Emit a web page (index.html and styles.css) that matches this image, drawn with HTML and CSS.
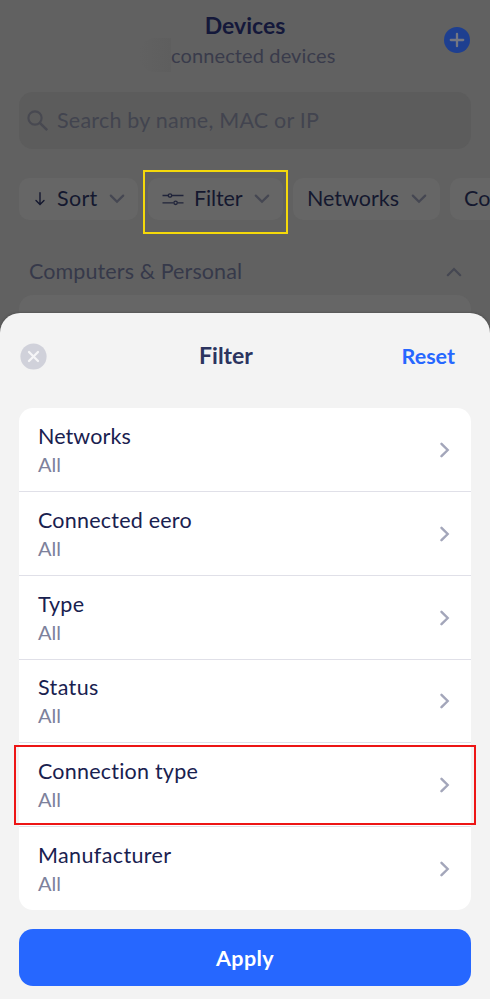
FILE: index.html
```html
<!DOCTYPE html>
<html lang="en">
<head>
<meta charset="utf-8">
<title>Devices</title>
<link rel="stylesheet" href="styles.css">
</head>
<body>
<div class="app">
  <main class="page">
    <header class="header">
      <h1 class="title">Devices</h1>
      <p class="subtitle"><span class="smudge"></span><span>connected devices</span></p>
      <svg class="add" viewBox="0 0 26 26"><circle cx="13" cy="13" r="13" fill="#1e3f90"/><path d="M13 6.8v12.4M6.8 13h12.4" stroke="#747782" stroke-width="2.3" stroke-linecap="round"/></svg>
    </header>
    <div class="search">
      <svg class="search-icon" viewBox="0 0 22 22" fill="none" stroke="#484951" stroke-width="2.1"><circle cx="8" cy="8" r="6.6"/><path d="M12.8 12.8l7.400 7.400" stroke-width="2.5"/></svg>
      <span class="search-text">Search by name, MAC or IP</span>
    </div>
    <nav class="chips">
      <div class="chip chip-sort">
        <svg class="arrow" viewBox="0 0 10 14" fill="none" stroke="#14182f" stroke-width="1.4"><path d="M5 .8v11.6M1 8.500l4 4 4-4" stroke-linecap="round"/></svg>
        <span class="label-sort">Sort</span>
        <svg class="chev" viewBox="0 0 16 10"><path d="M1.8 1.6L8 7.8l6.200-6.200"/></svg>
      </div>
      <div class="chip chip-filter">
        <svg class="sliders" viewBox="0 0 22 14" fill="none" stroke="#20243a" stroke-width="1.3"><path d="M.5 3.500h5.500M10 3.500h11.500M.5 10.800h11M15.600 10.800h5.900"/><circle cx="8" cy="3.500" r="1.700"/><circle cx="13.600" cy="10.800" r="1.700"/></svg>
        <span class="label-filter">Filter</span>
        <svg class="chev" viewBox="0 0 16 10"><path d="M1.8 1.6L8 7.8l6.200-6.200"/></svg>
        <span class="mark-yellow"></span>
      </div>
      <div class="chip chip-networks">
        <span>Networks</span>
        <svg class="chev" viewBox="0 0 16 10"><path d="M1.8 1.6L8 7.8l6.200-6.200"/></svg>
      </div>
      <div class="chip chip-more"><span>Co</span></div>
    </nav>
    <div class="group">
      <span class="group-name">Computers &amp; Personal</span>
      <svg class="chev" viewBox="0 0 16 10"><path d="M1.8 8.200L8 2l6.200 6.200"/></svg>
    </div>
    <div class="card"></div>
  </main>
  <section class="sheet">
    <div class="sheet-head">
      <svg class="close" viewBox="0 0 27 27"><circle cx="13.500" cy="13.500" r="13.100" fill="#d0d1da"/><path d="M9 9l9 9M18 9l-9 9" stroke="#f5f5f7" stroke-width="2.300" stroke-linecap="round"/></svg>
      <h2 class="sheet-title">Filter</h2>
      <span class="reset">Reset</span>
    </div>
    <div class="list">
      <div class="row"><div><div class="name">Networks</div><div class="value">All</div></div><svg class="next" viewBox="0 0 10 16"><path d="M1.500 1.800L7.700 8l-6.200 6.200"/></svg></div>
      <div class="row"><div><div class="name name-wide">Connected eero</div><div class="value">All</div></div><svg class="next" viewBox="0 0 10 16"><path d="M1.500 1.800L7.700 8l-6.200 6.200"/></svg></div>
      <div class="row"><div><div class="name name-wide">Type</div><div class="value">All</div></div><svg class="next" viewBox="0 0 10 16"><path d="M1.500 1.800L7.700 8l-6.200 6.200"/></svg></div>
      <div class="row"><div><div class="name name-wider">Status</div><div class="value">All</div></div><svg class="next" viewBox="0 0 10 16"><path d="M1.500 1.800L7.700 8l-6.200 6.200"/></svg></div>
      <div class="row"><div><div class="name name-wide">Connection type</div><div class="value">All</div></div><svg class="next" viewBox="0 0 10 16"><path d="M1.500 1.800L7.700 8l-6.200 6.200"/></svg><span class="mark-red"></span></div>
      <div class="row"><div><div class="name name-wider">Manufacturer</div><div class="value">All</div></div><svg class="next" viewBox="0 0 10 16"><path d="M1.500 1.800L7.700 8l-6.200 6.200"/></svg></div>
    </div>
    <div class="apply">Apply</div>
  </section>
</div>
</body>
</html>
```
FILE: styles.css
```css
* { box-sizing: border-box; }
body {
  margin: 0;
  font-family: Lato, "Liberation Sans", sans-serif;
  font-size: 21.5px;
  font-variant-ligatures: none;
  color: #19214f;
}
h1, h2, p { margin: 0; }
svg { display: block; flex: none; }
span { white-space: nowrap; }

.app {
  width: 490px;
  height: 999px;
  overflow: hidden;
  display: flex;
  flex-direction: column;
  background: #616161;
}
.page { height: 313px; flex: none; overflow: hidden; }

.header { position: relative; height: 92px; padding-top: 10px; text-align: center; }
.title { font-size: 23px; line-height: 30px; font-weight: 700; color: #14183a; }
.subtitle {
  display: flex;
  height: 30px;
  padding-left: 139px;
  line-height: 30px;
  font-size: 20px;
  letter-spacing: 0.12px;
  color: #393b4b;
}
.smudge {
  width: 32px;
  height: 34px;
  margin-top: -2px;
  border-radius: 16px 0 0 16px;
  background: linear-gradient(90deg, #616161, #5e5e5e);
}
.add { position: absolute; left: 444px; top: 27px; width: 26px; height: 26px; }

.search {
  display: flex;
  align-items: center;
  width: 452px;
  height: 57px;
  margin-left: 19px;
  padding-left: 8px;
  border-radius: 14px;
  background: #5c5c5c;
  color: #42444f;
}
.search-icon { width: 22px; height: 22px; margin-right: 8px; }
.search-text { padding-bottom: 2px; letter-spacing: 0.22px; }

.chips {
  display: flex;
  gap: 10px;
  height: 42px;
  margin: 29px 0 0 19px;
  color: #14182f;
}
.chip {
  position: relative;
  display: flex;
  flex: none;
  align-items: center;
  height: 42px;
  border-radius: 10px;
  background: #666;
}
.chip > span:not(.mark-yellow) { padding-bottom: 2px; }
.chip .chev { margin-left: auto; }
.chip-sort { width: 119px; padding: 0 13px 0 16px; }
.chip-filter { width: 135px; padding: 0 13px 0 14px; }
.chip-networks { width: 147px; padding: 0 13px 0 14px; }
.chip-more { width: 80px; padding-left: 14px; }
.arrow { width: 10px; height: 14px; margin-right: 12px; }
.label-sort { letter-spacing: 0.3px; }
.sliders { width: 22px; height: 14px; margin-right: 10px; }
.label-filter { letter-spacing: -0.1px; }
.chev { width: 16px; height: 10px; fill: none; stroke: #454752; stroke-width: 2.2; stroke-linecap: round; }
.mark-yellow {
  position: absolute;
  left: -5px;
  top: -8px;
  width: 145px;
  height: 64px;
  border: 2px solid #f5d90a;
}

.group {
  display: flex;
  align-items: center;
  justify-content: space-between;
  height: 30px;
  margin: 37px 28px 0 29px;
  color: #36394a;
}
.group-name { padding-bottom: 2px; letter-spacing: 0.1px; }
.card { height: 30px; margin: 8px 19px 0; border-radius: 14px; background: #666; }

.sheet {
  position: relative;
  flex: none;
  height: 686px;
  border-radius: 20px 20px 0 0;
  background: #f3f3f3;
  box-shadow: 0 0 3px #444;
}
.sheet-head {
  display: grid;
  grid-template-columns: 100px 1fr 138px;
  align-items: center;
  height: 86px;
  padding: 0 19px;
}
.close { width: 27px; height: 27px; margin-left: 1px; }
.sheet-title { padding-bottom: 2px; font-size: 23px; font-weight: 700; text-align: center; color: #2b345f; }
.reset { padding: 0 16px 1px 0; text-align: right; font-weight: 700; color: #2667ff; }

.list {
  width: 452px;
  height: 502px;
  margin: 9px 0 0 19px;
  border-radius: 14px;
  background: #fff;
  display: grid;
  grid-template-rows: 84px repeat(4, 83.75px) 83px;
}
.row {
  position: relative;
  display: flex;
  align-items: center;
  justify-content: space-between;
  padding: 1px 21px 0 19px;
  border-bottom: 1px solid #e0e0e8;
}
.row:last-child { border-bottom: 0; }
.name { line-height: 28px; letter-spacing: 0.1px; }
.name-wide { letter-spacing: 0.22px; }
.name-wider { letter-spacing: 0.38px; }
.value { font-size: 20px; line-height: 28px; color: #7d819c; }
.next { width: 10px; height: 16px; fill: none; stroke: #a3a6ba; stroke-width: 2.4; stroke-linecap: round; }
.mark-red {
  position: absolute;
  left: -5px;
  top: 2px;
  width: 462px;
  height: 80px;
  border: 2px solid #ed1515;
}
.apply {
  display: flex;
  align-items: center;
  justify-content: center;
  width: 452px;
  height: 57px;
  margin: 19px 0 0 19px;
  border-radius: 14px;
  background: #2667ff;
  color: #fff;
  font-weight: 700;
  letter-spacing: 0.4px;
}
```
